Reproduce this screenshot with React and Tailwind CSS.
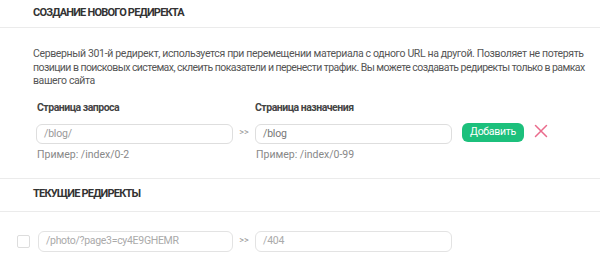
import React from "react";

function Arrows() {
  return <span className="w-[22px] text-center text-[9px] text-[#999] leading-none -mt-[2px]">&gt;&gt;</span>;
}

export default function App() {
  return (
    <div className="w-[600px] h-[255px] overflow-hidden bg-white text-[#444]" style={{ fontFamily: 'Roboto, "Noto Sans", sans-serif' }}>
      <div className="h-[28px] border-b border-[#ebebeb] pl-[33px] flex items-center">
        <h2 className="text-[11px] font-bold text-[#333] uppercase tracking-[-0.8px]">Создание нового редиректа</h2>
      </div>
      <p className="pl-[33px] w-[600px] pt-[19px] text-[10.5px] leading-[13.5px] text-[#555] whitespace-nowrap">
        <span className="block tracking-[-0.36px]">Серверный 301-й редирект, используется при перемещении материала с одного URL на другой. Позволяет не потерять</span>
        <span className="block tracking-[-0.56px]">позиции в поисковых системах, склеить показатели и перенести трафик. Вы можете создавать редиректы только в рамках</span>
        <span className="block tracking-[-0.4px]">вашего сайта</span>
      </p>
      <div className="pl-[36px] pt-[13px] flex items-start">
        <div className="flex flex-col w-[197px]">
          <label className="text-[10.5px] font-bold text-[#444] leading-[14px] pl-[1px] tracking-[-0.5px]">Страница запроса</label>
          <div className="mt-[9px] h-[20px] rounded-[6px] border border-[#dedede] flex items-center px-[7px] text-[10.5px] text-[#999] tracking-[-0.2px]">/blog/</div>
          <div className="mt-[4px] text-[10.5px] text-[#888] leading-[14px] pl-[1px]">Пример: /index/0-2</div>
        </div>
        <div className="mt-[23px] h-[20px] flex items-center"><Arrows /></div>
        <div className="flex flex-col w-[197px]">
          <label className="text-[10.5px] font-bold text-[#444] leading-[14px] tracking-[-0.5px]">Страница назначения</label>
          <div className="mt-[9px] h-[20px] rounded-[6px] border border-[#dedede] flex items-center px-[7px] text-[10.5px] text-[#777] tracking-[-0.2px]">/blog</div>
          <div className="mt-[4px] text-[10.5px] text-[#888] leading-[14px] pl-[1px]">Пример: /index/0-99</div>
        </div>
        <button className="ml-[10px] mt-[22px] h-[19px] w-[62px] rounded-[6px] bg-[#1cc07c] text-white text-[10.5px] tracking-[-0.3px] flex items-center justify-center">Добавить</button>
        <div className="ml-[10px] mt-[23px] h-[14px] flex items-center">
          <svg width="14" height="14" viewBox="0 0 14 14"><path d="M1.5 1.5 L12.5 12.5 M12.5 1.5 L1.5 12.5" stroke="#ea6b8c" strokeWidth="1.5" strokeLinecap="round" /></svg>
        </div>
      </div>
      <div className="mt-[16px] h-[34px] border-y border-[#ebebeb] pl-[33px] flex items-center">
        <h2 className="text-[11px] font-bold text-[#333] uppercase tracking-[-0.8px]">Текущие редиректы</h2>
      </div>
      <div className="pl-[17px] pt-[19px] flex items-center">
        <div className="w-[13px] h-[13px] border border-[#ddd] rounded-[2px]" />
        <div className="ml-[8px] w-[195px] h-[21px] rounded-[6px] border border-[#e3e3e3] flex items-center px-[7px] text-[10.5px] text-[#aaa] tracking-[-0.3px]">/photo/?page3=cy4E9GHEMR</div>
        <Arrows />
        <div className="w-[197px] h-[21px] rounded-[6px] border border-[#e3e3e3] flex items-center px-[7px] text-[10.5px] text-[#aaa] tracking-[-0.2px]">/404</div>
      </div>
    </div>
  );
}
